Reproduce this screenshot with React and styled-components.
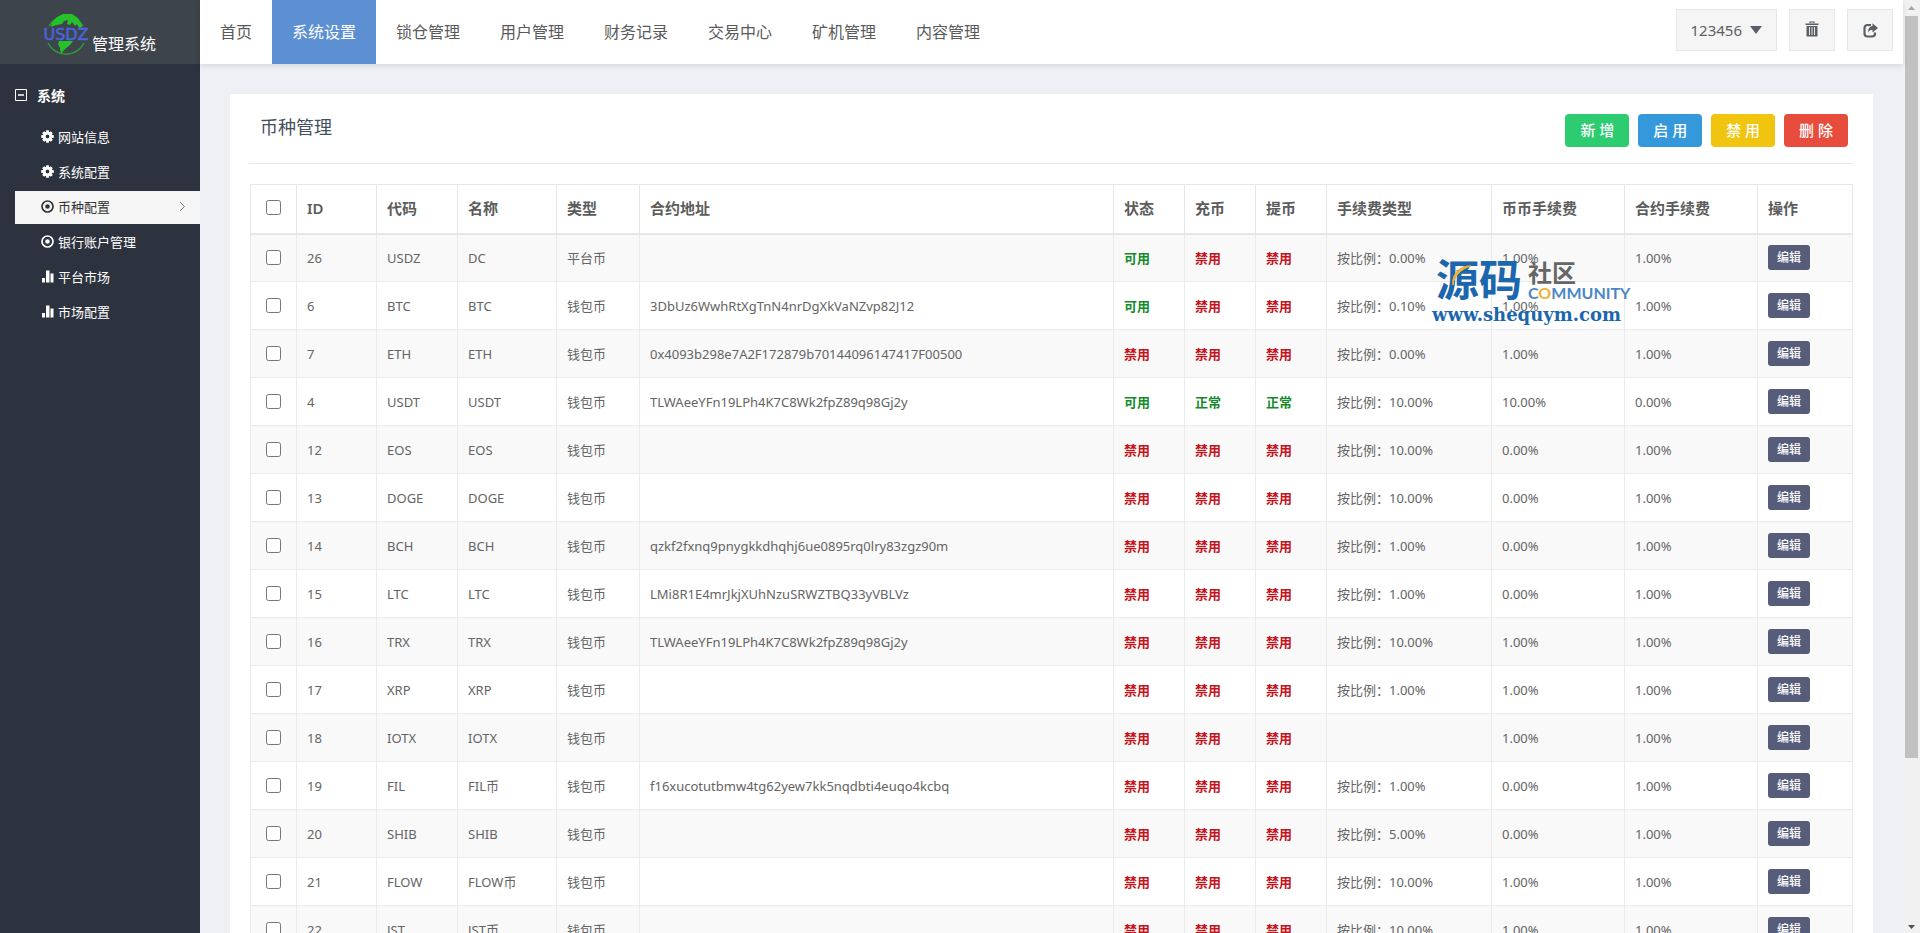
import React from "react";
import styled, { createGlobalStyle } from "styled-components";

const GlobalStyle = createGlobalStyle`
  * { box-sizing: border-box; }
  body {
    margin: 0;
    background: #eef0f6;
    color: #646464;
    font-family: "Noto Sans", "Noto Sans CJK SC", sans-serif;
    font-size: 13px;
    line-height: 20px;
  }
  button { font-family: inherit; cursor: pointer; }
  a { color: inherit; text-decoration: none; }
`;

const Shell = styled.div`
  position: relative;
  display: flex;
  height: 100vh;
  overflow: hidden;
`;

const Sidebar = styled.aside`
  flex: 0 0 200px;
  background: #2c323e;
  color: #fff;
`;

const Brand = styled.a`
  display: flex;
  align-items: center;
  height: 64px;
  padding-left: 42px;
  background: #3e444c;
`;

const BrandName = styled.span`
  padding-top: 24px;
  font-size: 16px;
  color: #fff;
`;

const MenuTitle = styled.button`
  display: flex;
  align-items: center;
  gap: 10px;
  margin: 20px 0 15px;
  padding: 0 15px;
  height: 22px;
  border: 0;
  background: none;
  color: #fff;
  font-size: 14px;
  font-weight: 700;
`;

const Menu = styled.nav`
  display: flex;
  flex-direction: column;
  gap: 2px;
  padding-left: 15px;
`;

const MenuLink = styled.a`
  display: flex;
  align-items: center;
  gap: 4px;
  height: 33px;
  padding: 0 14px 2px 26px;
  background: ${(p) => (p.$active ? "#f5f5f5" : "transparent")};
  color: ${(p) => (p.$active ? "#333" : "#fff")};
  svg:last-child { margin-left: ${(p) => (p.$active ? "auto" : "0")}; }
`;

const Page = styled.div`
  flex: 1;
  min-width: 0;
  display: flex;
  flex-direction: column;
`;

const TopBar = styled.header`
  position: relative;
  display: flex;
  align-items: flex-start;
  justify-content: space-between;
  flex: 0 0 64px;
  padding-right: 10px;
  background: #fff;
  box-shadow: 0 2px 6px rgba(0, 0, 0, 0.1);
`;

const TopNav = styled.nav`
  display: flex;
`;

const TopLink = styled.a`
  padding: 0 20px;
  font-size: 16px;
  line-height: 64px;
  background: ${(p) => (p.$active ? "#5c90d2" : "transparent")};
  color: ${(p) => (p.$active ? "#fff" : "#5a5a5a")};
`;

const Tools = styled.div`
  display: flex;
  gap: 12px;
  padding-top: 9px;
`;

const ToolButton = styled.button`
  display: flex;
  align-items: center;
  justify-content: center;
  gap: 8px;
  height: 42px;
  min-width: 46px;
  padding: 0 14px;
  border: 1px solid #e7e7e7;
  background: #f5f5f5;
  color: #5a5f66;
  font-size: 15px;
`;

const Main = styled.main`
  flex: 1;
  min-height: 0;
  overflow-y: auto;
  scrollbar-width: none;
  padding: 30px;
`;

const Panel = styled.section`
  padding: 0 20px 20px;
  background: #fff;
`;

const PanelHead = styled.div`
  display: flex;
  align-items: flex-start;
  justify-content: space-between;
  height: 70px;
  margin: 0 -1px 20px;
  padding: 20px 6px 0 11px;
  border-bottom: 1px solid #e8e8e8;
`;

const Title = styled.h1`
  margin: 0;
  font-size: 18px;
  line-height: 26px;
  font-weight: 400;
  color: #45505e;
`;

const Actions = styled.div`
  display: flex;
  gap: 9px;
`;

const ActionButton = styled.button`
  height: 33px;
  padding: 0 15px 2px;
  border: 0;
  border-radius: 4px;
  background: ${(p) => p.$color};
  color: #fff;
  font-size: 15px;
  line-height: 20px;
  font-weight: 500;
`;

const Grid = styled.table`
  width: 100%;
  table-layout: fixed;
  border-collapse: collapse;
  background: #fff;
`;

const Col = styled.col`
  width: ${(p) => (p.$w ? p.$w + "px" : "auto")};
`;

const HeadCell = styled.th`
  height: 49px;
  padding: 0 10px 2px;
  border: 1px solid #e7e7e7;
  border-bottom-width: 2px;
  text-align: ${(p) => (p.$center ? "center" : "left")};
  font-size: 15px;
  font-weight: 600;
  color: #5c5c5c;
`;

const Row = styled.tr`
  &:nth-child(odd) { background: #f9f9f9; }
`;

const Cell = styled.td`
  height: 48px;
  padding: 0 10px;
  border: 1px solid #ebebeb;
  text-align: ${(p) => (p.$center ? "center" : "left")};
  white-space: nowrap;
`;

const Check = styled.input`
  display: block;
  width: 15px;
  height: 15px;
  margin: 0 auto;
`;

const Status = styled.strong`
  color: ${(p) => (p.$on ? "#158a2c" : "#c41420")};
`;

const EditButton = styled.button`
  display: block;
  height: 25px;
  padding: 0 9px;
  border: 0;
  border-radius: 3px;
  background: #565d7a;
  color: #fff;
  font-size: 12px;
  line-height: 20px;
  font-weight: 500;
`;

const ScrollTrack = styled.div`
  flex: 0 0 17px;
  display: flex;
  flex-direction: column;
  align-items: center;
  background: #f1f1f1;
`;

const ScrollArrow = styled.svg`
  flex: 0 0 16px;
`;

const ScrollThumb = styled.div`
  width: 13px;
  flex: 14;
  background: #c1c1c1;
`;

const ScrollSpace = styled.div`
  flex: 3;
`;

const Mark = styled.div`
  position: absolute;
  top: 256px;
  right: 290px;
  width: 198px;
  white-space: nowrap;
  pointer-events: none;
`;

const MarkRow = styled.div`
  position: relative;
  display: flex;
  gap: 6px;
  padding-left: 4px;
`;

const MarkName = styled.span`
  font-size: 43px;
  line-height: 48px;
  font-weight: 700;
  color: #1c66ad;
`;

const MarkSide = styled.span`
  display: flex;
  flex-direction: column;
  padding-top: 6px;
`;

const MarkArea = styled.span`
  font-size: 24px;
  line-height: 22px;
  font-weight: 700;
  color: #666;
`;

const MarkWord = styled.span`
  font-family: Lato, sans-serif;
  font-size: 16px;
  line-height: 18px;
  font-weight: 700;
  color: #4c86c6;
  em { font-style: normal; color: #f2b233; }
`;

const MarkSwoosh = styled.svg`
  position: absolute;
  left: 18px;
  top: 8px;
`;

const MarkSite = styled.div`
  font-family: "DejaVu Serif", serif;
  font-size: 18px;
  line-height: 22px;
  font-weight: 700;
  color: #1c66ad;
`;

const GearIcon = () => (
  <svg width="13" height="13" viewBox="-8 -8 16 16" fill="currentColor" aria-hidden="true">
    {[0, 45, 90, 135].map((a) => (
      <rect key={a} x="-1.8" y="-7.8" width="3.6" height="15.6" rx="0.8" transform={`rotate(${a})`} mask="url(#gearHole)" />
    ))}
    <circle r="4.3" fill="none" stroke="currentColor" strokeWidth="3.2" />
    <mask id="gearHole" maskUnits="userSpaceOnUse" x="-8" y="-8" width="16" height="16">
      <rect x="-8" y="-8" width="16" height="16" fill="#fff" />
      <circle r="2.7" fill="#000" />
    </mask>
  </svg>
);

const RecordIcon = () => (
  <svg width="13" height="13" viewBox="0 0 13 13" aria-hidden="true">
    <circle cx="6.5" cy="6.5" r="5.5" fill="none" stroke="currentColor" strokeWidth="1.7" />
    <circle cx="6.5" cy="6.5" r="2.3" fill="currentColor" />
  </svg>
);

const StatsIcon = () => (
  <svg width="13" height="13" viewBox="0 0 13 13" fill="currentColor" aria-hidden="true">
    <path d="M1 8h3v4.500H1zM5 .5h3.500v12H5zM9.500 3.500h3v9h-3z" />
  </svg>
);

const ChevronIcon = () => (
  <svg width="7" height="11" viewBox="0 0 7 11" fill="none" stroke="#777" aria-hidden="true">
    <path d="M1 1l4.500 4.500L1 10" />
  </svg>
);

const CollapseIcon = () => (
  <svg width="12" height="12" viewBox="0 0 12 12" fill="none" stroke="currentColor" aria-hidden="true">
    <path d="M.5.5h11v11H.5z" />
    <path d="M3 6h6" strokeWidth="1.500" />
  </svg>
);

const CaretIcon = () => (
  <svg width="12" height="8" viewBox="0 0 12 8" fill="currentColor" aria-hidden="true">
    <path d="M0 0h12L6 8z" />
  </svg>
);

const TrashIcon = () => (
  <svg width="14" height="18" viewBox="0 0 14 18" aria-hidden="true">
    <path d="M5 2.300V1h4v1.300" fill="none" stroke="currentColor" strokeWidth="1.200" />
    <path d="M.5 2.500h13v1.500H.5zM1.500 5h11v10.500h-11z" fill="currentColor" />
    <path d="M4.500 6v8M7 6v8M9.500 6v8" stroke="#f5f5f5" strokeWidth=".9" />
  </svg>
);

const ShareIcon = () => (
  <svg width="15" height="15" viewBox="0 0 15 15" aria-hidden="true">
    <path d="M8 2H4.500A3 3 0 0 0 1.500 5v5.500a3 3 0 0 0 3 3H9a3 3 0 0 0 3-3V9.500" fill="none" stroke="currentColor" strokeWidth="2.200" />
    <path d="M9.500.3L15 5l-5.500 4.500V6.800C7.500 6.800 6 7.500 5 9.800 5 6 6.800 3.200 9.500 3z" fill="currentColor" />
  </svg>
);

const GlobeLogo = () => (
  <svg width="50" height="48" viewBox="0 0 50 48" role="img" aria-label="USDZ">
    <path d="M7 18A20 20 0 0 1 41 18M6 35a20 20 0 0 0 36 0" fill="none" stroke="#2f9a3a" strokeWidth="1.500" />
    <path d="M9 19l1-5 5-5 6-3 9 0 6 4 3 5 1 4-3 1-2-4-2 2-3-4-2 3-3-1 1-4-4 1-2 3-5 1-4 1z" fill="#25c22a" />
    <path d="M17 33h14l-3 4-5 4-4 5-1-6-2-4z" fill="#25c22a" />
    <text x="24" y="32" textAnchor="middle" fontFamily="DejaVu Sans, sans-serif" fontSize="16" fontWeight="400" fill="#4a63d8" stroke="#4a63d8" strokeWidth=".6">USDZ</text>
  </svg>
);

const topLinks = ["首页", "系统设置", "锁仓管理", "用户管理", "财务记录", "交易中心", "矿机管理", "内容管理"];

const menu = [
  ["网站信息", GearIcon],
  ["系统配置", GearIcon],
  ["币种配置", RecordIcon],
  ["银行账户管理", RecordIcon],
  ["平台市场", StatsIcon],
  ["市场配置", StatsIcon],
];

const actions = [
  ["新 增", "#2ecc71"],
  ["启 用", "#3498db"],
  ["禁 用", "#f1c40f"],
  ["删 除", "#e74c3c"],
];

const columns = [
  ["ID", 80], ["代码", 81], ["名称", 99], ["类型", 83], ["合约地址", 0],
  ["状态", 71], ["充币", 71], ["提币", 71], ["手续费类型", 165],
  ["币币手续费", 133], ["合约手续费", 133], ["操作", 95],
];

const N = "禁用";
const W = "钱包币";
const coins = [
  [26, "USDZ", "DC", "平台币", "", "可用", N, N, "0.00%", "1.00%", "1.00%"],
  [6, "BTC", "BTC", W, "3DbUz6WwhRtXgTnN4nrDgXkVaNZvp82J12", "可用", N, N, "0.10%", "1.00%", "1.00%"],
  [7, "ETH", "ETH", W, "0x4093b298e7A2F172879b70144096147417F00500", N, N, N, "0.00%", "1.00%", "1.00%"],
  [4, "USDT", "USDT", W, "TLWAeeYFn19LPh4K7C8Wk2fpZ89q98Gj2y", "可用", "正常", "正常", "10.00%", "10.00%", "0.00%"],
  [12, "EOS", "EOS", W, "", N, N, N, "10.00%", "0.00%", "1.00%"],
  [13, "DOGE", "DOGE", W, "", N, N, N, "10.00%", "0.00%", "1.00%"],
  [14, "BCH", "BCH", W, "qzkf2fxnq9pnygkkdhqhj6ue0895rq0lry83zgz90m", N, N, N, "1.00%", "0.00%", "1.00%"],
  [15, "LTC", "LTC", W, "LMi8R1E4mrJkjXUhNzuSRWZTBQ33yVBLVz", N, N, N, "1.00%", "0.00%", "1.00%"],
  [16, "TRX", "TRX", W, "TLWAeeYFn19LPh4K7C8Wk2fpZ89q98Gj2y", N, N, N, "10.00%", "1.00%", "1.00%"],
  [17, "XRP", "XRP", W, "", N, N, N, "1.00%", "1.00%", "1.00%"],
  [18, "IOTX", "IOTX", W, "", N, N, N, "", "1.00%", "1.00%"],
  [19, "FIL", "FIL币", W, "f16xucotutbmw4tg62yew7kk5nqdbti4euqo4kcbq", N, N, N, "1.00%", "0.00%", "1.00%"],
  [20, "SHIB", "SHIB", W, "", N, N, N, "5.00%", "0.00%", "1.00%"],
  [21, "FLOW", "FLOW币", W, "", N, N, N, "10.00%", "1.00%", "1.00%"],
  [22, "JST", "JST币", W, "", N, N, N, "10.00%", "1.00%", "1.00%"],
];

export default function App() {
  return (
    <Shell>
      <GlobalStyle />
      <Sidebar>
        <Brand href="#">
          <GlobeLogo />
          <BrandName>管理系统</BrandName>
        </Brand>
        <MenuTitle type="button"><CollapseIcon />系统</MenuTitle>
        <Menu>
          {menu.map(([label, Icon]) => {
            const active = label === "币种配置";
            return (
              <MenuLink key={label} href="#" $active={active}>
                <Icon />
                {label}
                {active && <ChevronIcon />}
              </MenuLink>
            );
          })}
        </Menu>
      </Sidebar>
      <Page>
        <TopBar>
          <TopNav>
            {topLinks.map((label) => (
              <TopLink key={label} href="#" $active={label === "系统设置"}>{label}</TopLink>
            ))}
          </TopNav>
          <Tools>
            <ToolButton type="button">123456 <CaretIcon /></ToolButton>
            <ToolButton type="button" aria-label="清除缓存"><TrashIcon /></ToolButton>
            <ToolButton type="button" aria-label="退出"><ShareIcon /></ToolButton>
          </Tools>
        </TopBar>
        <Main>
          <Panel>
            <PanelHead>
              <Title>币种管理</Title>
              <Actions>
                {actions.map(([label, color]) => (
                  <ActionButton key={label} type="button" $color={color}>{label}</ActionButton>
                ))}
              </Actions>
            </PanelHead>
            <Grid>
              <colgroup>
                <Col $w={46} />
                {columns.map(([label, w]) => <Col key={label} $w={w} />)}
              </colgroup>
              <thead>
                <tr>
                  <HeadCell $center><Check type="checkbox" aria-label="全选" /></HeadCell>
                  {columns.map(([label]) => <HeadCell key={label}>{label}</HeadCell>)}
                </tr>
              </thead>
              <tbody>
                {coins.map(([id, code, name, type, address, state, deposit, withdraw, fee, coinFee, contractFee]) => (
                  <Row key={id}>
                    <Cell $center><Check type="checkbox" aria-label={code} /></Cell>
                    <Cell>{id}</Cell>
                    <Cell>{code}</Cell>
                    <Cell>{name}</Cell>
                    <Cell>{type}</Cell>
                    <Cell>{address}</Cell>
                    {[state, deposit, withdraw].map((s, i) => (
                      <Cell key={i}><Status $on={s !== N}>{s}</Status></Cell>
                    ))}
                    <Cell>{fee && `按比例：${fee}`}</Cell>
                    <Cell>{coinFee}</Cell>
                    <Cell>{contractFee}</Cell>
                    <Cell><EditButton type="button">编辑</EditButton></Cell>
                  </Row>
                ))}
              </tbody>
            </Grid>
          </Panel>
        </Main>
      </Page>
      <ScrollTrack aria-hidden="true">
        <ScrollArrow width="17" height="16" viewBox="0 0 17 16"><path d="M5 10h7L8.500 6z" fill="#a3a3a3" /></ScrollArrow>
        <ScrollThumb />
        <ScrollSpace />
        <ScrollArrow width="17" height="16" viewBox="0 0 17 16"><path d="M5 8h7l-3.500 4z" fill="#505050" /></ScrollArrow>
      </ScrollTrack>
      <Mark>
        <MarkRow>
          <MarkName>源码</MarkName>
          <MarkSide>
            <MarkArea>社区</MarkArea>
            <MarkWord>C<em>O</em>MMUNITY</MarkWord>
          </MarkSide>
          <MarkSwoosh width="24" height="28" viewBox="0 0 24 28">
            <path d="M21 2C10 1 1 11 3 21 4 12 11 5 21 2z" fill="#f2b233" stroke="#f2b233" />
          </MarkSwoosh>
        </MarkRow>
        <MarkSite>www.shequym.com</MarkSite>
      </Mark>
    </Shell>
  );
}
